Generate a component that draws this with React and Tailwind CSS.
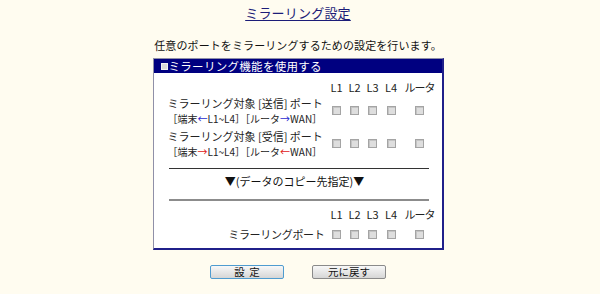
import React from 'react';

const font = { fontFamily: '"Noto Sans CJK JP", "Noto Sans", sans-serif' };

function Box() {
  return <span className="block w-[9px] h-[9px] border border-[#a4a4a4] bg-[#dedede] shadow-[inset_1px_1px_0_#c4c4c4]" />;
}

function ColHeads() {
  return (
    <div className="flex h-[14px] items-center text-[11px] leading-[14px] text-[#222]">
      <div className="w-[174px]" />
      <div className="w-[18px] text-center">L1</div>
      <div className="w-[18px] text-center">L2</div>
      <div className="w-[18px] text-center">L3</div>
      <div className="w-[19px] text-center">L4</div>
      <div className="w-[38px] text-center tracking-[-1px]">ルータ</div>
    </div>
  );
}

function Boxes() {
  return (
    <>
      <div className="w-[18px] flex justify-center"><Box /></div>
      <div className="w-[18px] flex justify-center"><Box /></div>
      <div className="w-[18px] flex justify-center"><Box /></div>
      <div className="w-[19px] flex justify-center"><Box /></div>
      <div className="w-[38px] flex justify-center"><Box /></div>
    </>
  );
}

function PortRow({ label, a, b, color }) {
  return (
    <div className="flex h-[33px] items-center">
      <div className="w-[174px] pl-[14px] flex flex-col text-[#222]">
        <div className="h-[16px] leading-[16px] text-[11px] tracking-[0px] whitespace-nowrap">{label}</div>
        <div className="h-[16px] leading-[16px] text-[10px] whitespace-nowrap">
          ［端末<span className={color}>{a}</span>L1~L4］［ルータ<span className={color}>{b}</span>WAN］
        </div>
      </div>
      <Boxes />
    </div>
  );
}

export default function App() {
  return (
    <div className="w-[600px] h-[294px] bg-[#fffcf0] overflow-hidden" style={font}>
      <div className="w-[596px] flex flex-col items-center">
        <div className="mt-[5px] h-[16px] leading-[16px] text-[13px] text-[#1c1c78] underline underline-offset-2 tracking-[0.2px]">
          ミラーリング設定
        </div>
        <div className="mt-[17px] h-[14px] leading-[14px] text-[11px] text-[#111] tracking-[0.1px]">
          任意のポートをミラーリングするための設定を行います。
        </div>

        <div className="mt-[6px] w-[291px] border-l border-t border-[#9090a8] border-r-2 border-b-2 border-r-[#20208a] border-b-[#20208a] bg-white">
          <div className="h-[14px] bg-[#000080] flex items-center pl-[7px] text-white text-[11.5px] leading-[14px] tracking-[0.3px]">
            <span className="block w-[7px] h-[7px] bg-[#d8d8d8] border border-[#f0f0f0] mr-[1px]" />
            ミラーリング機能を使用する
          </div>

          <div className="pt-[7px]">
            <ColHeads />
            <PortRow label="ミラーリング対象 [送信] ポート" a="←" b="→" color="text-[#2a2ad0]" />
            <PortRow label="ミラーリング対象 [受信] ポート" a="→" b="←" color="text-[#e02020]" />

            <div className="mt-[8px] ml-[15px] mr-[13px] h-px bg-[#333]" />
            <div className="mt-[5px] h-[14px] leading-[14px] text-[11px] text-center text-[#111] pr-[6px]">
              ▼(データのコピー先指定)▼
            </div>
            <div className="mt-[11px] ml-[15px] mr-[13px] h-[2px] bg-[#8c8c8c]" />

            <div className="mt-[6px]">
              <ColHeads />
            </div>
            <div className="mt-[5px] flex h-[16px] items-center">
              <div className="w-[174px] pr-[3px] text-right text-[11px] leading-[16px] text-[#222] tracking-[-0.3px]">
                ミラーリングポート
              </div>
              <Boxes />
            </div>
            <div className="h-[6px]" />
          </div>
        </div>

        <div className="mt-[15px] flex gap-[28px]">
          <button className="w-[74px] h-[14px] rounded-[2px] border border-[#4f9cd0] bg-gradient-to-b from-[#f8f8f8] to-[#d6d6d6] text-[10.5px] leading-[12px] text-[#111]">
            設&nbsp;&nbsp;定
          </button>
          <button className="w-[74px] h-[14px] rounded-[2px] border border-[#8a8a8a] bg-gradient-to-b from-[#f8f8f8] to-[#d6d6d6] text-[10.5px] leading-[12px] text-[#111]">
            元に戻す
          </button>
        </div>
      </div>
    </div>
  );
}
